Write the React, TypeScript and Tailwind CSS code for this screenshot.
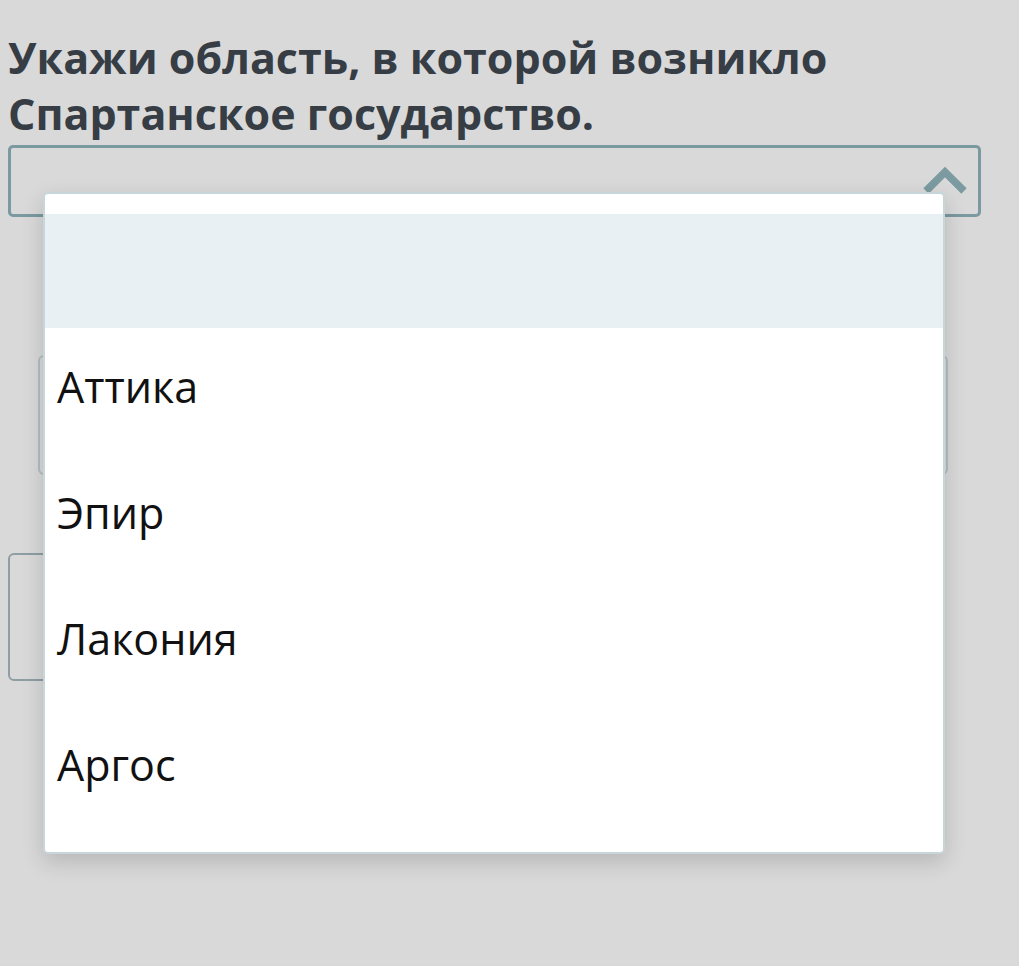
export default function App() {
  const options = ["Аттика", "Эпир", "Лакония", "Аргос"];

  return (
    <div
      className="min-h-screen bg-[#d9d9d9] px-2 pt-[30px]"
      style={{ fontFamily: '"Open Sans", "Noto Sans", sans-serif' }}
    >
      <h1 className="text-[43px] leading-[56px] font-bold text-[#363d45]">
        Укажи область, в которой возникло
        <br />
        Спартанское государство.
      </h1>

      <div className="relative mt-[3px] w-[973px]">
        {/* select */}
        <div className="h-[72px] rounded-[5px] border-[3px] border-[#7a99a0]">
          <svg
            className="absolute right-[13px] top-[20px]"
            width="46"
            height="30"
            viewBox="0 0 46 30"
          >
            <polyline
              points="4,26 23,7 42,26"
              fill="none"
              stroke="#7b9ba1"
              strokeWidth="7.5"
            />
          </svg>
        </div>

        {/* open dropdown */}
        <div className="absolute left-[35px] top-[47px] z-10 w-[902px] rounded-[5px] border-2 border-[#c6d6d9] bg-white py-[20px] shadow-[0_8px_22px_rgba(0,0,0,0.16)]">
          <div className="h-[114px] bg-[#e8f0f3]" />
          {options.map((o) => (
            <div
              key={o}
              className="flex h-[126px] items-center pb-2 pl-3 text-[43px] text-[#111]"
            >
              {o}
            </div>
          ))}
        </div>
      </div>

      {/* fields behind the dropdown */}
      <div className="ml-[30px] mt-[138px] h-[120px] w-[910px] rounded-[6px] border-2 border-[#b3bec2]" />
      <div className="mt-[78px] h-[128px] w-[400px] rounded-[6px] border-2 border-[#8e9ea4]" />
    </div>
  );
}
